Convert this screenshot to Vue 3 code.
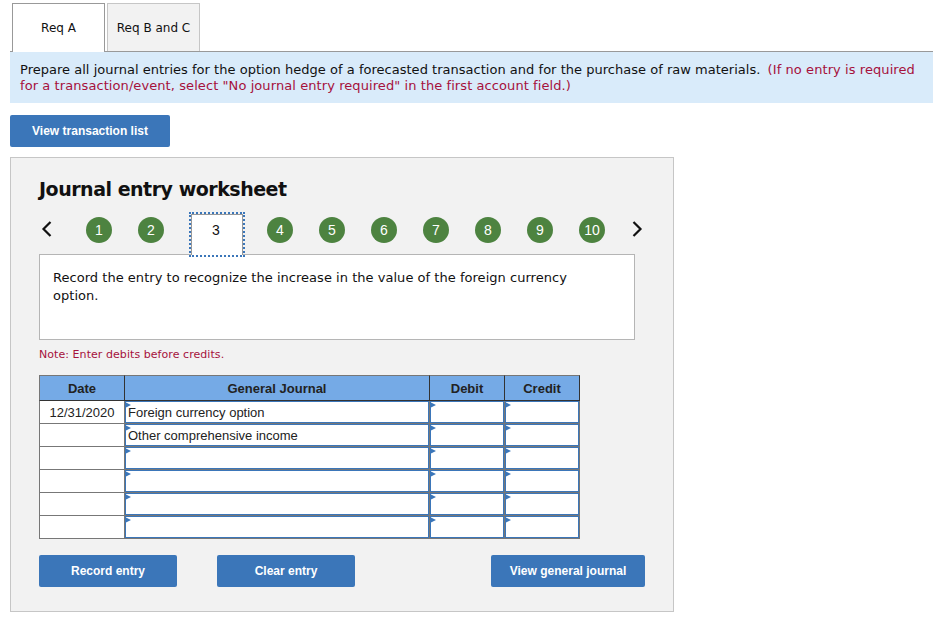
<script setup>
const steps = [1, 2, 3, 4, 5, 6, 7, 8, 9, 10]
const rows = [
  { date: '12/31/2020', account: 'Foreign currency option' },
  { date: '', account: 'Other comprehensive income' },
  { date: '', account: '' },
  { date: '', account: '' },
  { date: '', account: '' },
  { date: '', account: '' }
]
</script>

<template>
  <div class="page">
    <div class="tabs">
      <div class="tab active">Req A</div>
      <div class="tab">Req B and C</div>
    </div>
    <div class="instruction">
      Prepare all journal entries for the option hedge of a forecasted transaction and for the purchase of raw materials.
      <span class="red">(If no entry is required for a transaction/event, select "No journal entry required" in the first account field.)</span>
    </div>
    <button class="btn list-btn">View transaction list</button>
    <section class="panel">
      <h2 class="title">Journal entry worksheet</h2>
      <div class="stepper">
        <svg class="chev" width="12" height="18" viewBox="0 0 12 18"><path d="M9.5 2 L2.5 9 L9.5 16" fill="none" stroke="#111" stroke-width="2.2" /></svg>
        <div class="steps">
          <template v-for="s in steps" :key="s">
            <div v-if="s === 3" class="current">3</div>
            <div v-else class="dot">{{ s }}</div>
          </template>
        </div>
        <svg class="chev" width="12" height="18" viewBox="0 0 12 18"><path d="M2.5 2 L9.5 9 L2.5 16" fill="none" stroke="#111" stroke-width="2.2" /></svg>
      </div>
      <div class="desc">Record the entry to recognize the increase in the value of the foreign currency option.</div>
      <p class="note">Note: Enter debits before credits.</p>
      <table class="journal">
        <thead>
          <tr>
            <th class="c-date">Date</th>
            <th class="c-acct">General Journal</th>
            <th class="c-num">Debit</th>
            <th class="c-num">Credit</th>
          </tr>
        </thead>
        <tbody>
          <tr v-for="(r, i) in rows" :key="i">
            <td class="date">{{ r.date }}</td>
            <td class="input"><div class="field">{{ r.account }}</div></td>
            <td class="input"><div class="field"></div></td>
            <td class="input"><div class="field"></div></td>
          </tr>
        </tbody>
      </table>
      <div class="actions">
        <button class="btn act">Record entry</button>
        <button class="btn act clear">Clear entry</button>
        <button class="btn act view">View general journal</button>
      </div>
    </section>
  </div>
</template>

<style>
html, body { margin: 0; background: #fff; }
</style>

<style scoped>
.page {
  width: 942px;
  height: 625px;
  overflow: hidden;
  box-sizing: border-box;
  padding: 3px 9px 0 10px;
  font-family: "DejaVu Sans", Verdana, sans-serif;
  color: #111;
}
.tabs {
  display: flex;
  gap: 2px;
  padding-left: 2px;
  height: 48px;
}
.tab {
  width: 93px;
  height: 48px;
  box-sizing: border-box;
  border: 1px solid #c6c6c6;
  border-bottom: 0;
  background: #f2f2f2;
  font-size: 12px;
  display: flex;
  align-items: center;
  justify-content: center;
}
.tab.active {
  background: #fff;
  border-color: #999;
  height: 49px;
  position: relative;
  z-index: 1;
}
.instruction {
  box-sizing: border-box;
  height: 52px;
  padding: 10px 10px 0;
  background: #d9ebfa;
  border-top: 1px solid #999;
  font-size: 13px;
  line-height: 16px;
  letter-spacing: 0.02px;
}
.red {
  color: #a6113c;
  margin-left: 3px;
  letter-spacing: 0.08px;
}
.btn {
  display: block;
  border: 0;
  border-radius: 2px;
  background: #3b76b9;
  color: #fff;
  font-family: "Liberation Sans", Arial, sans-serif;
  font-weight: 700;
  font-size: 12px;
  padding: 0;
  height: 32px;
}
.list-btn { width: 160px; margin-top: 12px; }
.panel {
  box-sizing: border-box;
  width: 664px;
  height: 455px;
  margin-top: 10px;
  padding: 20px 28px 0;
  background: #f2f2f2;
  border: 1px solid #c6c6c6;
}
.title {
  margin: 0;
  font-size: 19px;
  line-height: 22px;
  font-weight: 700;
  font-family: "DejaVu Sans", Verdana, sans-serif;
  letter-spacing: -0.48px;
}
.stepper {
  display: flex;
  align-items: flex-start;
  margin-top: 14px;
  height: 40px;
}
.chev { flex: none; margin: 6px 0 0 2px; }
.steps {
  display: flex;
  align-items: flex-start;
  margin-left: 33px;
  margin-right: 23px;
  width: 520px;
}
.dot {
  flex: none;
  width: 26px;
  height: 26px;
  margin-top: 3px;
  margin-right: 26px;
  border-radius: 50%;
  background: #4d8340;
  color: #fff;
  font-family: "Liberation Sans", Arial, sans-serif;
  font-size: 14px;
  display: flex;
  align-items: center;
  justify-content: center;
}
.dot:nth-child(2) { margin-right: 27px; }
.dot:last-child { margin-right: 0; }
.current {
  flex: none;
  position: relative;
  z-index: 1;
  box-sizing: border-box;
  width: 52px;
  height: 41px;
  margin-right: 24px;
  padding: 5px 2px 0 0;
  background: #fff;
  border: 1px solid #999;
  border-bottom: 0;
  outline: 2px dotted #3b76b9;
  font-family: "Liberation Sans", Arial, sans-serif;
  font-size: 14px;
  line-height: 20px;
  text-align: center;
}
.desc {
  box-sizing: border-box;
  width: 596px;
  height: 86px;
  padding: 14px 40px 14px 13px;
  background: #fff;
  border: 1px solid #b5b5b5;
  font-size: 13px;
  line-height: 18px;
  letter-spacing: 0.03px;
}
.note {
  margin: 8px 0 0;
  font-size: 11px;
  line-height: 14px;
  letter-spacing: 0.06px;
  color: #a6113c;
}
.journal {
  margin-top: 13px;
  border-collapse: separate;
  border-spacing: 0;
  table-layout: fixed;
  width: 541px;
  font-family: "Liberation Sans", Arial, sans-serif;
  font-size: 13px;
  color: #222;
}
.journal th {
  box-sizing: border-box;
  height: 26px;
  padding: 0;
  background: #75aae6;
  font-weight: 700;
  font-size: 13px;
  border-top: 1px solid #777;
  border-right: 1px solid #333;
  border-bottom: 1px solid #333;
}
.journal th:first-child { border-left: 1px solid #777; }
.c-date { width: 86px; }
.c-acct { width: 305px; }
.c-num { width: 75px; }
.journal td {
  box-sizing: border-box;
  height: 23px;
  padding: 0;
  border-right: 1px solid #777;
  border-bottom: 1px solid #777;
  background: #fff;
}
.journal td.date {
  border-left: 1px solid #777;
  text-align: center;
}
.field {
  box-sizing: border-box;
  height: 22px;
  padding: 2px 0 0 2px;
  line-height: 17px;
  background: #fff;
  border: 1px solid #3b76b9;
  position: relative;
  white-space: nowrap;
}
.field::before {
  content: "";
  position: absolute;
  left: -1px;
  top: 0;
  border-left: 6px solid #3b76b9;
  border-top: 3.5px solid transparent;
  border-bottom: 3.5px solid transparent;
}
.actions {
  display: flex;
  margin-top: 16px;
}
.act { width: 138px; }
.clear { margin-left: 40px; }
.view { width: 154px; margin-left: 136px; }
</style>
